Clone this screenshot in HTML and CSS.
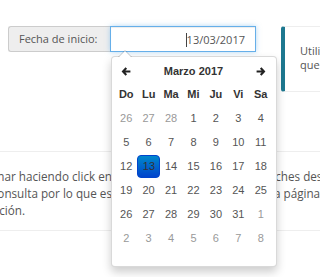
FILE: index.html
```html
<!DOCTYPE html>
<html lang="es">
<head>
<meta charset="utf-8">
<link rel="stylesheet" href="styles.css">
</head>
<body>
<div class="page">
  <div class="top-row">
    <div class="field">
      <span class="field-label">Fecha de inicio:</span>
      <div class="input-wrap">
        <div class="date-input"><span class="caret"></span>13/03/2017</div>
        <div class="datepicker">
          <table class="cal">
            <thead>
              <tr class="nav">
                <th class="arrow"><svg width="10" height="9" viewBox="0 0 11 10"><path d="M5 0.3 L0.6 5 L5 9.7 L6.7 8.1 L4.8 6.2 L10.4 6.2 L10.4 3.8 L4.8 3.8 L6.7 1.9 Z" fill="#222"/></svg></th>
                <th class="month" colspan="5">Marzo 2017</th>
                <th class="arrow"><svg width="10" height="9" viewBox="0 0 11 10"><path d="M6 0.3 L10.4 5 L6 9.7 L4.3 8.1 L6.2 6.2 L0.6 6.2 L0.6 3.8 L6.2 3.8 L4.3 1.9 Z" fill="#222"/></svg></th>
              </tr>
              <tr class="dow">
                <th>Do</th><th>Lu</th><th>Ma</th><th>Mi</th><th>Ju</th><th>Vi</th><th>Sa</th>
              </tr>
            </thead>
            <tbody>
              <tr><td class="old">26</td><td class="old">27</td><td class="old">28</td><td>1</td><td>2</td><td>3</td><td>4</td></tr>
              <tr><td>5</td><td>6</td><td>7</td><td>8</td><td>9</td><td>10</td><td>11</td></tr>
              <tr><td>12</td><td class="active"><span>13</span></td><td>14</td><td>15</td><td>16</td><td>17</td><td>18</td></tr>
              <tr><td>19</td><td>20</td><td>21</td><td>22</td><td>23</td><td>24</td><td>25</td></tr>
              <tr><td>26</td><td>27</td><td>28</td><td>29</td><td>30</td><td>31</td><td class="new">1</td></tr>
              <tr><td class="new">2</td><td class="new">3</td><td class="new">4</td><td class="new">5</td><td class="new">6</td><td class="new">7</td><td class="new">8</td></tr>
            </tbody>
            <tfoot><tr><td colspan="7" class="foot"></td></tr></tfoot>
          </table>
        </div>
      </div>
    </div>
    <div class="info">
      <p>Utilice el calendario para seleccionar la fecha</p>
      <p>que desee consultar.</p>
    </div>
  </div>
  <div class="section">
    <div class="text-line">
      <span class="clip-left"><span>Puede seleccionar haciendo click en</span></span>
      <span class="clip-right"><span class="shift-1">noches desde</span></span>
    </div>
    <div class="text-line">
      <span class="clip-left mid"><span>la consulta por lo que es</span></span>
      <span class="clip-right"><span class="shift-2">la página</span></span>
    </div>
    <div class="text-line">
      <span class="clip-left short"><span>información.</span></span>
    </div>
  </div>
</div>
</body>
</html>
```
FILE: styles.css
```css
html, body {
  margin: 0;
  padding: 0;
  background: #fff;
}
body {
  font-family: "Open Sans", "Liberation Sans", sans-serif;
  font-size: 11px;
  color: #555;
  width: 320px;
  height: 277px;
  overflow: hidden;
}
.page {
  padding-top: 26px;
}
.top-row {
  display: flex;
  align-items: flex-start;
  padding-left: 8px;
  gap: 25px;
}
.field {
  display: flex;
  flex: none;
}
.field-label {
  box-sizing: border-box;
  width: 102px;
  height: 26px;
  background: #eee;
  border: 1px solid #ccc;
  border-right: none;
  border-radius: 3px 0 0 3px;
  padding-left: 10px;
  line-height: 24px;
  white-space: nowrap;
}
.input-wrap {
  position: relative;
}
.date-input {
  box-sizing: border-box;
  width: 146px;
  height: 26px;
  border: 1px solid #66afe9;
  box-shadow: inset 0 1px 1px rgba(0,0,0,.075), 0 0 5px rgba(102,175,233,.5);
  background: #fff;
  text-align: right;
  padding-right: 10px;
  line-height: 25px;
  color: #555;
}
.caret {
  display: inline-block;
  width: 1px;
  height: 14px;
  background: #444;
  vertical-align: -3px;
}
.datepicker {
  position: absolute;
  left: 1px;
  top: 30px;
  z-index: 5;
  box-sizing: border-box;
  width: 166px;
  background: #fff;
  border: 1px solid rgba(0,0,0,.15);
  border-radius: 4px;
  box-shadow: 0 5px 10px rgba(0,0,0,.2);
  padding: 3px 4px 4px 3px;
  font-family: "Liberation Sans", Arial, sans-serif;
  font-size: 11px;
}
.datepicker::before {
  content: "";
  position: absolute;
  left: 6px;
  top: -7px;
  border-left: 7px solid transparent;
  border-right: 7px solid transparent;
  border-bottom: 7px solid rgba(0,0,0,.2);
}
.datepicker::after {
  content: "";
  position: absolute;
  left: 7px;
  top: -6px;
  border-left: 6px solid transparent;
  border-right: 6px solid transparent;
  border-bottom: 6px solid #fff;
}
.cal {
  border-collapse: collapse;
  width: 100%;
  table-layout: fixed;
}
.cal th, .cal td {
  padding: 0;
  text-align: center;
}
.nav th {
  height: 22px;
  font-weight: bold;
  color: #333;
}
.nav .arrow svg {
  display: block;
  margin: 0 auto;
}
.dow th {
  height: 24px;
  font-weight: bold;
  color: #333;
}
.cal td {
  height: 24px;
  color: #555;
}
.cal td.old, .cal td.new {
  color: #999;
}
.cal td.active span {
  display: block;
  width: 23px;
  height: 23px;
  line-height: 21px;
  margin: 0 auto;
  border-radius: 4px;
  background: linear-gradient(to bottom, #0088cc, #0044cc);
  border: 1px solid #0044cc;
  box-sizing: border-box;
  color: #333;
}
.cal td.foot {
  height: 12px;
}
.info {
  flex: 1 1 auto;
  min-width: 0;
  box-sizing: border-box;
  height: 66px;
  border: 1px solid #eee;
  border-right: none;
  border-left: 4px solid #1d7890;
  border-radius: 3px 0 0 3px;
  padding: 17px 0 0 15px;
  overflow: hidden;
  white-space: nowrap;
}
.info p {
  margin: 0;
  line-height: 14px;
}
.section {
  margin-top: 59px;
  border-top: 1px solid #eee;
  border-bottom: 1px solid #eee;
  box-sizing: border-box;
  height: 80px;
  padding-top: 16px;
  font-size: 11.7px;
}
.text-line {
  display: grid;
  grid-template-columns: 275px 45px;
  line-height: 17px;
  white-space: nowrap;
}
.clip-left {
  display: flex;
  justify-content: flex-end;
  width: 112px;
  overflow: hidden;
}
.clip-left.mid {
  width: 112px;
}
.clip-left.short {
  width: 25px;
}
.clip-left > span {
  flex: none;
}
.clip-right {
  grid-column: 2;
  display: flex;
  overflow: hidden;
}
.clip-right > span {
  flex: none;
}
.shift-1 {
  margin-left: -14px;
}
.shift-2 {
  margin-left: -4px;
}
```
